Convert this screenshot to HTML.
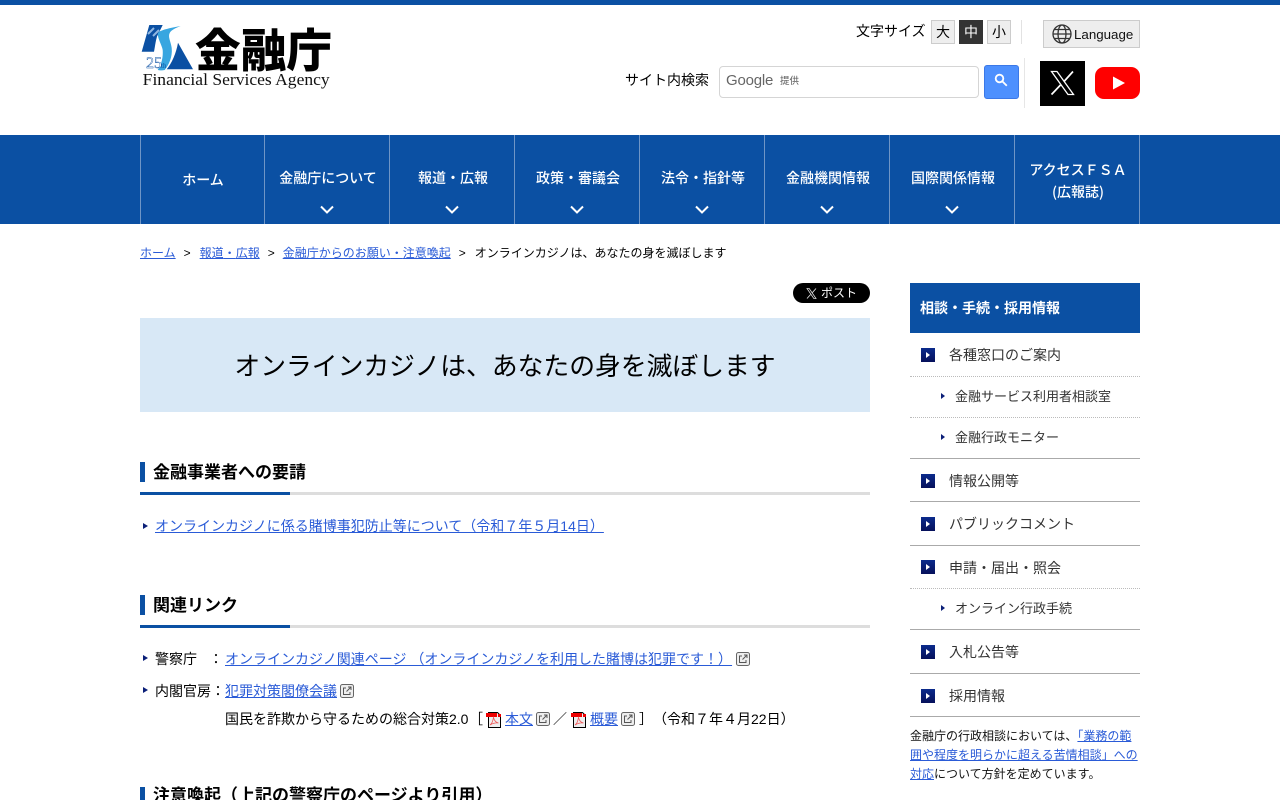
<!DOCTYPE html>
<html lang="ja">
<head>
<meta charset="utf-8">
<title>オンラインカジノは、あなたの身を滅ぼします</title>
<style>
html,body{margin:0;padding:0;background:#fff;width:1280px;height:800px;overflow:hidden}
body{font-family:"Liberation Sans","Noto Sans CJK JP",sans-serif;color:#000;font-size:14px;position:relative}
b.j{font-family:"Noto Sans CJK JP",sans-serif;font-weight:inherit}
a{color:#2a5bd7;text-decoration:underline}
.a{position:absolute;white-space:nowrap}
.nav{position:absolute;top:135px;left:0;width:1280px;height:89px;background:#0b50a3}
.ni{position:absolute;top:0;height:89px;width:124px;border-left:1px solid #6f95c6;color:#fff;font-family:"Noto Sans CJK JP",sans-serif;font-weight:500;font-size:14px;text-align:center}
.ni span{position:absolute;left:1px;right:-1px;top:33px;line-height:20px}
.ni svg{position:absolute;left:54px;top:69px}
.fs{position:absolute;top:20px;width:22px;height:22px;border:1px solid #ccc;background:#eee;text-align:center;line-height:23px;font-size:14px}
.h2bar{position:absolute;left:140px;width:5px;height:20px;background:#0b50a3}
.h2t{position:absolute;left:153px;font-size:17px;font-weight:bold;line-height:20px;white-space:nowrap}
.h2l{position:absolute;left:140px;width:730px;height:3px;background:#ddd}
.h2l i{display:block;width:150px;height:3px;background:#0b50a3}
.tri{position:absolute;width:0;height:0;border-left:5px solid #0b1f78;border-top:3.5px solid transparent;border-bottom:3.5px solid transparent}
.sq{position:absolute;left:921px;width:14px;height:14px;background:linear-gradient(#0b2b8c,#06105a)}
.sq:after{content:"";position:absolute;left:5px;top:4px;border-left:4px solid #fff;border-top:3px solid transparent;border-bottom:3px solid transparent}
.sl{position:absolute;left:949px;color:#333;font-size:14px;line-height:20px;white-space:nowrap}
.ss{position:absolute;left:955px;color:#333;font-size:13px;line-height:20px;white-space:nowrap}
.ln{position:absolute;left:910px;width:230px;height:0;border-top:1px solid #aaa}
.dl{position:absolute;left:910px;width:230px;height:0;border-top:1px dotted #bbb}
.ext{display:inline-block;vertical-align:-2px;width:14px;height:14px;margin-left:3px}
.pdf{position:absolute;width:16px;height:17px}
.gt{margin:0 9px 0 8px}
</style>
</head>
<body>
<svg width="0" height="0" style="position:absolute">
<symbol id="e" viewBox="0 0 14 14"><rect x=".5" y=".5" width="13" height="13" rx="2" fill="#eee" stroke="#666"/><path d="M6 4H3.500v6.500H10V8M6.500 7.500L11 3M8 3h3v3" fill="none" stroke="#555" stroke-width="1"/></symbol>
<symbol id="p" viewBox="0 0 16 17"><path d="M2.500 1.500h9l3 3v12h-12z" fill="#eee" stroke="#000"/><rect x="0" y="2" width="11" height="4" fill="#e00"/><path d="M12 3h3v3h-3z" fill="#e00"/><path d="M4 14c3-2 3-6 3.500-7.500.5 2 2 5 5 5.500-3-.5-6 .5-8.500 2z" fill="none" stroke="#e55" stroke-width=".8"/></symbol>
</svg>

<div class="a" style="left:0;top:0;width:1280px;height:5px;background:#0b50a3"></div>

<!-- logo -->
<svg class="a" style="left:140px;top:22px" width="194" height="70" viewBox="0 0 194 70">
<path d="M9.300 3h13.400L17 14.500c-1.500 5-2 10-3 15.200H1.700z" fill="#0b50a3"/>
<path d="M38 20.700L53 47.300H26.700c5-6 9.500-16 11.300-26.600z" fill="#0b50a3"/>
<path d="M40.700 4C30 6 20 8 18 11c-1 5 4 12 4.700 17 .5 7-1 14-5 20 2 .5 5 .5 7 0 4-5 8-13 7-22-1-7-4-11-2-15 1.500-3 6-5 11-7z" fill="#38a6e0"/>
<path d="M8 12l6-6M13 14l6-6" stroke="#8fb6e0" stroke-width="2" fill="none"/>
<text x="6" y="46" font-family="Liberation Serif" font-size="16" fill="#fff" stroke="#0b50a3" stroke-width=".4">25</text>
<text x="21" y="46" font-family="Liberation Serif" font-size="7" fill="#0b50a3">th</text>
<text x="55" y="45" font-family="Noto Sans CJK JP" font-weight="900" font-size="46" fill="#000" textLength="137" lengthAdjust="spacingAndGlyphs">金融庁</text>
<text x="2.700" y="63" font-family="Liberation Serif" font-size="16.500" fill="#111" textLength="187" lengthAdjust="spacingAndGlyphs">Financial Services Agency</text>
</svg>

<!-- header right -->
<div class="a" style="left:856px;top:21px;font-size:14px;line-height:20px">文字サイズ</div>
<div class="fs" style="left:931px">大</div>
<div class="fs" style="left:959px;background:#333;color:#fff;border-color:#333">中</div>
<div class="fs" style="left:987px">小</div>
<div class="a" style="left:1021px;top:20px;width:1px;height:24px;background:#e2e2e2"></div>
<div class="a" style="left:1043px;top:20px;width:95px;height:26px;border:1px solid #ccc;background:#eee"></div>
<svg class="a" style="left:1052px;top:24px" width="20" height="20" viewBox="0 0 20 20" fill="none" stroke="#333" stroke-width="1.300"><circle cx="10" cy="10" r="9"/><ellipse cx="10" cy="10" rx="4" ry="9"/><path d="M1 10h18M2.300 5.500h15.400M2.300 14.500h15.400"/></svg>
<div class="a" style="left:1074px;top:25px;font-size:13.333px;line-height:20px;color:#111">Language</div>

<div class="a" style="left:625px;top:70px;font-size:14px;line-height:20px">サイト内検索</div>
<div class="a" style="left:719px;top:66px;width:258px;height:30px;border:1px solid #d5d5d5;border-radius:4px;background:#fff"></div>
<div class="a" style="left:726px;top:71px;font-size:15px;letter-spacing:-.2px;line-height:20px;color:#666">Google</div>
<div class="a" style="left:780px;top:74px;font-size:9.500px;line-height:16px;color:#555">提供</div>
<div class="a" style="left:984px;top:65px;width:33px;height:32px;border:1px solid #3b78e7;border-radius:3px;background:#4d90fe"></div>
<svg class="a" style="left:994px;top:73px" width="14" height="14" viewBox="0 0 14 14" fill="none" stroke="#fff" stroke-width="1.800"><circle cx="5.500" cy="5.500" r="3.800"/><path d="M8.500 8.500l4.300 4.300"/></svg>
<div class="a" style="left:1024px;top:58px;width:1px;height:50px;background:#e6e6e6"></div>
<div class="a" style="left:1040px;top:61px;width:45px;height:45px;background:#000"></div>
<svg class="a" style="left:1050px;top:70px" width="25" height="26" viewBox="0 0 25 26" fill="none" stroke="#fff"><path d="M1.500 1.500h5.500l16.500 23h-5.500z" stroke-width="1.300"/><path d="M23 1.500L14 11.500M10.500 15L1.500 24.500" stroke-width="1.700"/></svg>
<div class="a" style="left:1095px;top:67px;width:45px;height:32px;border-radius:9px;background:#f00"></div>
<svg class="a" style="left:1095px;top:67px" width="45" height="32"><path d="M18 9.500l12 6.500-12 6.500z" fill="#fff"/></svg>

<!-- nav -->
<div class="nav">
<div class="ni" style="left:140px"><span style="top:35px;left:0;right:0">ホーム</span></div>
<div class="ni" style="left:264px"><span>金融庁について</span><svg width="16" height="12" viewBox="0 0 16 12"><path d="M2 2.500l6 6 6-6" fill="none" stroke="#fff" stroke-width="2"/></svg></div>
<div class="ni" style="left:389px"><span>報道・広報</span><svg width="16" height="12" viewBox="0 0 16 12"><path d="M2 2.500l6 6 6-6" fill="none" stroke="#fff" stroke-width="2"/></svg></div>
<div class="ni" style="left:514px"><span>政策・審議会</span><svg width="16" height="12" viewBox="0 0 16 12"><path d="M2 2.500l6 6 6-6" fill="none" stroke="#fff" stroke-width="2"/></svg></div>
<div class="ni" style="left:639px"><span>法令・指針等</span><svg width="16" height="12" viewBox="0 0 16 12"><path d="M2 2.500l6 6 6-6" fill="none" stroke="#fff" stroke-width="2"/></svg></div>
<div class="ni" style="left:764px"><span>金融機関情報</span><svg width="16" height="12" viewBox="0 0 16 12"><path d="M2 2.500l6 6 6-6" fill="none" stroke="#fff" stroke-width="2"/></svg></div>
<div class="ni" style="left:889px"><span>国際関係情報</span><svg width="16" height="12" viewBox="0 0 16 12"><path d="M2 2.500l6 6 6-6" fill="none" stroke="#fff" stroke-width="2"/></svg></div>
<div class="ni" style="left:1014px"><span style="top:24px;line-height:22px">アクセスＦＳＡ<br>(広報誌)</span></div>
<div class="ni" style="left:1139px;width:0"></div>
</div>

<!-- breadcrumb -->
<div class="a" style="left:140px;top:244px;font-size:12px;line-height:18px"><a href="#">ホーム</a><span class="gt">&gt;</span><a href="#">報道<b class="j">・</b>広報</a><span class="gt" style="margin-right:8px">&gt;</span><a href="#">金融庁からのお願い<b class="j">・</b>注意喚起</a><span class="gt">&gt;</span>オンラインカジノは、あなたの身を滅ぼします</div>

<!-- post -->
<div class="a" style="left:793px;top:283px;width:77px;height:20px;border-radius:10px;background:#000"></div>
<svg class="a" style="left:806px;top:288px" width="11" height="11" viewBox="0 0 11 11" fill="none" stroke="#ddd"><path d="M1 .5h2.200l6.800 10H7.800z" stroke-width=".8"/><path d="M10 .5L6.200 4.800M4.600 6.500L1 10.500" stroke-width=".9"/></svg>
<div class="a" style="left:821px;top:284px;font-size:12px;line-height:18px;color:#fff">ポスト</div>

<!-- title -->
<div class="a" style="left:140px;top:318px;width:730px;height:94px;background:#d8e8f6;font-size:25.800px;line-height:99px;text-align:center">オンラインカジノは、あなたの身を滅ぼします</div>

<!-- section 1 -->
<div class="h2bar" style="top:462px"></div>
<div class="h2t" style="top:463px">金融事業者への要請</div>
<div class="h2l" style="top:492px"><i></i></div>
<div class="tri" style="left:143px;top:523px"></div>
<div class="a" style="left:155px;top:516px;line-height:20px"><a href="#">オンラインカジノに係る賭博事犯防止等について（令和７年５月14日）</a></div>

<!-- section 2 -->
<div class="h2bar" style="top:595px"></div>
<div class="h2t" style="top:596px">関連リンク</div>
<div class="h2l" style="top:625px"><i></i></div>
<div class="tri" style="left:143px;top:655px"></div>
<div class="a" style="left:155px;top:649px;line-height:20px">警察庁</div>
<div class="a" style="left:209px;top:649px;line-height:20px">：</div>
<div class="a" style="left:225px;top:649px;line-height:20px"><a href="#">オンラインカジノ関連ページ （オンラインカジノを利用した賭博は犯罪です！）</a><svg class="ext" style="margin-left:4px"><use href="#e"/></svg></div>
<div class="tri" style="left:143px;top:687px"></div>
<div class="a" style="left:155px;top:681px;line-height:20px">内閣官房：</div>
<div class="a" style="left:225px;top:681px;line-height:20px"><a href="#">犯罪対策閣僚会議</a><svg class="ext"><use href="#e"/></svg></div>
<div class="a" style="left:225px;top:709px;line-height:20px">国民を詐欺から守るための総合対策2.0</div>
<div class="a" style="left:469px;top:709px;line-height:20px">［</div>
<svg class="pdf" style="left:486px;top:711px"><use href="#p"/></svg>
<div class="a" style="left:505px;top:709px;line-height:20px"><a href="#">本文</a><svg class="ext"><use href="#e"/></svg></div>
<div class="a" style="left:553px;top:709px;line-height:20px">／</div>
<svg class="pdf" style="left:571px;top:711px"><use href="#p"/></svg>
<div class="a" style="left:590px;top:709px;line-height:20px"><a href="#">概要</a><svg class="ext"><use href="#e"/></svg></div>
<div class="a" style="left:639px;top:709px;line-height:20px">］</div>
<div class="a" style="left:653px;top:709px;line-height:20px">（令和７年４月22日）</div>

<!-- section 3 -->
<div class="h2bar" style="top:787px"></div>
<div class="h2t" style="top:786px">注意喚起（上記の警察庁のページより引用）</div>

<!-- sidebar -->
<div class="a" style="left:910px;top:283px;width:220px;height:50px;padding-left:10px;background:#0b50a3;color:#fff;font-size:14px;font-weight:bold;line-height:51px">相談<b class="j">・</b>手続<b class="j">・</b>採用情報</div>

<div class="sq" style="top:348px"></div><div class="sl" style="top:345px">各種窓口のご案内</div>
<div class="dl" style="top:376px"></div>
<div class="tri" style="left:941px;top:393px;border-left-width:4px;border-top-width:3px;border-bottom-width:3px"></div><div class="ss" style="top:387px">金融サービス利用者相談室</div>
<div class="dl" style="top:417px"></div>
<div class="tri" style="left:941px;top:434px;border-left-width:4px;border-top-width:3px;border-bottom-width:3px"></div><div class="ss" style="top:428px">金融行政モニター</div>
<div class="ln" style="top:458px"></div>
<div class="sq" style="top:474px"></div><div class="sl" style="top:471px">情報公開等</div>
<div class="ln" style="top:501px"></div>
<div class="sq" style="top:517px"></div><div class="sl" style="top:514px">パブリックコメント</div>
<div class="ln" style="top:545px"></div>
<div class="sq" style="top:560px"></div><div class="sl" style="top:558px">申請<b class="j">・</b>届出<b class="j">・</b>照会</div>
<div class="dl" style="top:588px"></div>
<div class="tri" style="left:941px;top:605px;border-left-width:4px;border-top-width:3px;border-bottom-width:3px"></div><div class="ss" style="top:599px">オンライン行政手続</div>
<div class="ln" style="top:629px"></div>
<div class="sq" style="top:645px"></div><div class="sl" style="top:642px">入札公告等</div>
<div class="ln" style="top:673px"></div>
<div class="sq" style="top:689px"></div><div class="sl" style="top:686px">採用情報</div>
<div class="ln" style="top:716px"></div>
<div class="a" style="left:910px;top:727px;width:230px;white-space:normal;font-size:12px;line-height:19px;color:#111">金融庁の行政相談においては、<a href="#">「業務の範囲や程度を明らかに超える苦情相談」への対応</a>について方針を定めています。</div>
</body>
</html>
